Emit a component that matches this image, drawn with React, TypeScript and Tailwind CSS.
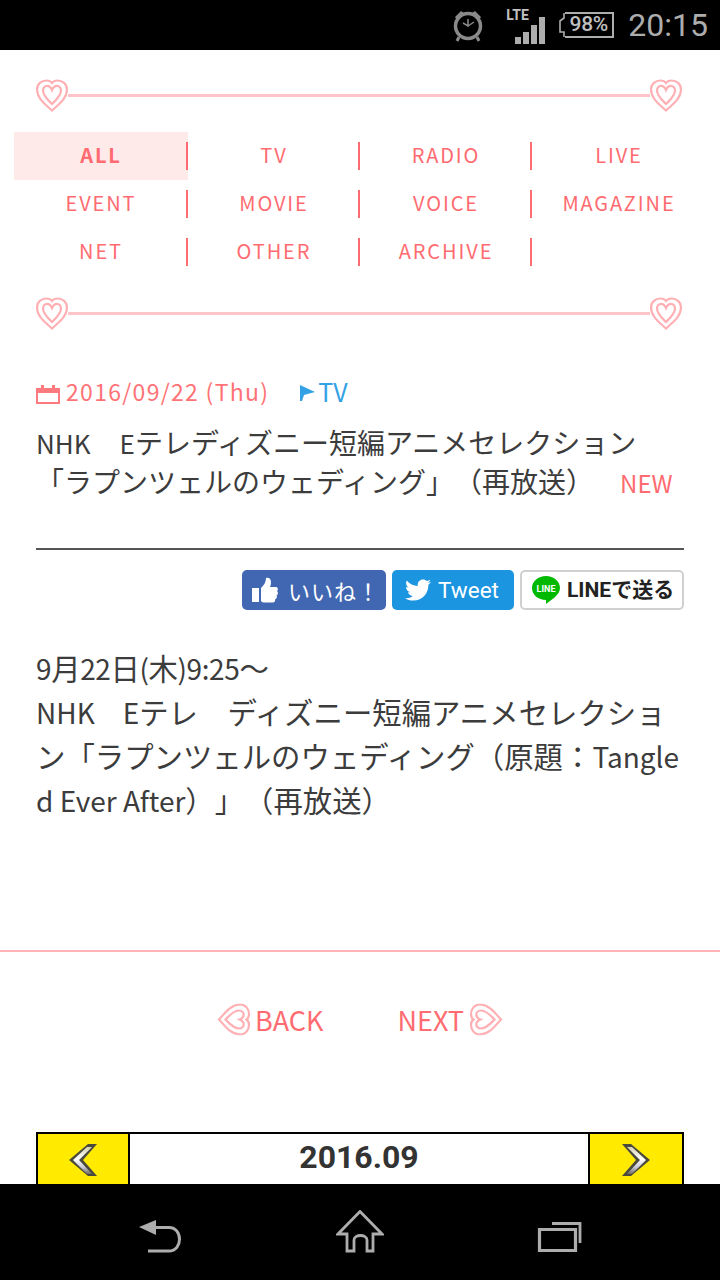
import { FaTwitter } from "react-icons/fa";

const jp = "font-['Noto_Sans_CJK_JP',sans-serif]";

function Heart({ rotate = 0 }: { rotate?: number }) {
  const outer = "M16 31 C11 26 1 20 1 10 C1 4.5 5.5 1 10.5 1 C13 1 15 2 16 3.5 C17 2 19 1 21.5 1 C26.5 1 31 4.5 31 10 C31 20 21 26 16 31 Z";
  const inner = "M16 24.5 C12 20.5 7 16.5 7 11 C7 8 9 6.3 11 6.3 C13 6.3 15 8 16 10.5 C17 8 19 6.3 21 6.3 C23 6.3 25 8 25 11 C25 16.5 20 20.5 16 24.5 Z";
  return (
    <svg width="32" height="33" viewBox="0 0 32 32" className="shrink-0" style={{ transform: `rotate(${rotate}deg)` }}>
      <path d={outer} fill="#fff" stroke="#ffb0b4" strokeWidth="2.2" />
      <path d={inner} fill="#fff" stroke="#ffb0b4" strokeWidth="2.2" />
    </svg>
  );
}

function HeartRule() {
  return (
    <div className="ml-[36px] mr-[38px] flex items-center">
      <Heart />
      <div className="h-[3px] flex-1 bg-[#ffc4c8]" />
      <Heart />
    </div>
  );
}

const items = ["ALL", "TV", "RADIO", "LIVE", "EVENT", "MOVIE", "VOICE", "MAGAZINE", "NET", "OTHER", "ARCHIVE", ""];

function Chevron({ flip = false }: { flip?: boolean }) {
  return (
    <svg width="30" height="34" viewBox="0 0 30 34" style={{ transform: flip ? "scaleX(-1)" : undefined }}>
      <defs>
        <linearGradient id={flip ? "cr" : "cl"} x1="0" y1="0" x2="0" y2="1">
          <stop offset="0" stopColor="#d8d2b0" />
          <stop offset="0.45" stopColor="#ffffff" />
          <stop offset="0.75" stopColor="#c8c8d8" />
          <stop offset="1" stopColor="#706c60" />
        </linearGradient>
      </defs>
      <path d="M20 1 L29 1 L15 17 L29 33 L20 33 L1 17 Z" fill="#4a4a3c" />
      <path d="M19 4 L24 4 L11 17 L24 31 L19 31 L5 17 Z" fill={`url(#${flip ? "cr" : "cl"})`} />
    </svg>
  );
}

export default function App() {
  const tj = "text-[28px] leading-none";
  const bj = "text-[29.4px] leading-none";
  return (
    <div className={`flex h-[1280px] w-[720px] flex-col overflow-hidden bg-white [text-spacing-trim:space-all] ${jp}`}>
      {/* Status bar */}
      <div className="flex h-[50px] shrink-0 items-center justify-end bg-black text-[#adadad]">
        <svg width="34" height="34" viewBox="0 0 34 34" className="mr-[20px]">
          <circle cx="17" cy="18" r="12.5" fill="none" stroke="#8a8a8a" strokeWidth="3.5" />
          <path d="M17 11 V18 L12 15 M17 18 L23 14" fill="none" stroke="#8a8a8a" strokeWidth="1.5" />
          <path d="M4 9 L10 3 L13 5 L6 12 Z M30 9 L24 3 L21 5 L28 12 Z" fill="#8a8a8a" />
          <path d="M8 29 L6 33 M26 29 L28 33" stroke="#8a8a8a" strokeWidth="3" />
        </svg>
        <div className="relative mr-[14px] h-[40px] w-[40px]">
          <span className="absolute left-[1px] top-[3px] font-['Roboto',sans-serif] text-[14px] font-bold leading-[14px] text-[#c0c0c0]">LTE</span>
          <div className="absolute bottom-[1px] right-0 flex items-end gap-[2px]">
            <div className="h-[7px] w-[6px] bg-[#adadad]" />
            <div className="h-[12px] w-[6px] bg-[#adadad]" />
            <div className="h-[19px] w-[6px] bg-[#adadad]" />
            <div className="h-[27px] w-[6px] bg-[#adadad]" />
          </div>
        </div>
        <div className="mr-[14px] flex items-center">
          <svg width="6" height="26" viewBox="0 0 6 26">
            <path d="M5 1 V6 L1 9 V20 L5 20 V25" fill="none" stroke="#adadad" strokeWidth="1.6" />
          </svg>
          <div className="flex h-[26px] w-[49px] items-center justify-center border-2 border-l-0 border-[#adadad] font-['Roboto',sans-serif] text-[21px] font-medium tracking-[-0.3px] text-[#c0c0c0]">98%</div>
        </div>
        <span className="mr-[12px] font-['Roboto',sans-serif] text-[32px] leading-none">20:15</span>
      </div>

      <div className="min-h-0 flex-1 overflow-hidden">
        <div className="pt-[29px]">
          <HeartRule />
        </div>

        <div className="ml-[14px] mt-[20px] grid grid-cols-[174px_172px_172px_172px]">
          {items.map((t, i) => (
            <div key={i} className={`flex h-[48px] items-center ${i === 0 ? "bg-[#ffeaea]" : ""}`}>
              {t ? (
                <>
                  <span className={`mb-[3px] flex-1 pl-[2px] text-center text-[20px] leading-[24px] tracking-[1.9px] text-[#ff6b70] ${i === 0 ? "font-bold" : ""}`}>{t}</span>
                  {i % 4 !== 3 && <div className="h-[28px] w-[2px] bg-[#ff6b70]" />}
                </>
              ) : null}
            </div>
          ))}
        </div>

        <div className="mt-[21px]">
          <HeartRule />
        </div>

        <div className="mx-[36px] mt-[46px] flex h-[30px] items-center">
          <svg width="24" height="20" viewBox="0 0 24 20" className="mt-[5px]">
            <path d="M1 5 H23 V19 H1 Z" fill="none" stroke="#ff7a7e" strokeWidth="2" />
            <path d="M1 5 H23 V9 H1 Z" fill="#ff7a7e" />
            <path d="M5 1 H8 V6 H5 Z M16 1 H19 V6 H16 Z" fill="#ff7a7e" />
          </svg>
          <span className="ml-[6px] text-[23px] leading-[30px] tracking-[1.3px] text-[#ff7377]">2016/09/22 (Thu)</span>
          <svg width="17" height="17" viewBox="0 0 17 17" className="ml-[30px] mt-[3px]">
            <path d="M1 1 L16 8 L5 11 L3 17 L1 17 Z" fill="#33a2e4" />
          </svg>
          <span className="ml-[2px] text-[25px] leading-[30px] text-[#33a2e4]">TV</span>
        </div>

        <div className="mx-[36px] mt-[17px] text-[26px] leading-[39px] text-[#3c3c3c]">
          <div>NHK<span className="text-[29px] leading-none">　</span>E<span className={tj}>テレディズニー短編アニメセレクション</span></div>
          <div className="flex h-[37px] items-center whitespace-nowrap">
            <span className={tj}>「ラプンツェルのウェディング」（再放送）</span>
            <span className="ml-[26px] mt-[4px] text-[24px] leading-none text-[#ff6b70]">NEW</span>
          </div>
        </div>

        <div className="mx-[36px] mt-[49px] h-[2px] bg-[#555]" />

        <div className="mx-[36px] mt-[20px] flex justify-end gap-[6px]">
          <div className="flex h-[40px] w-[144px] items-center rounded-[5px] bg-[#4267b2] pl-[10px] text-white">
            <svg width="26" height="26" viewBox="0 0 26 26" fill="#fff">
              <path d="M0 11 H7 V25 H0 Z" />
              <path d="M9 11 C12 8 14 5 14 1 C17 0 19 2 19 5 C19 7 18.5 9 18 10 H24 C26 10 26.5 13 25 14 C26.5 15 26 18 24.5 18.5 C25.5 20 24.5 22 23 22.5 C23.5 24 22.5 25.5 21 25.5 H13 C11 25.5 10 25 9 24 Z" />
            </svg>
            <span className="ml-[10px] whitespace-nowrap text-[22px] leading-none tracking-[1px]">いいね！</span>
          </div>
          <div className="flex h-[40px] w-[122px] items-center rounded-[5px] bg-[#1b95e0] pl-[13px] text-white">
            <FaTwitter className="h-[26px] w-[26px]" />
            <span className="ml-[7px] font-['Roboto',sans-serif] text-[22.5px] leading-none">Tweet</span>
          </div>
          <div className="flex h-[40px] w-[164px] items-center rounded-[5px] border-2 border-[#d0d0d0] bg-white pl-[10px]">
            <svg width="28" height="30" viewBox="0 0 28 30">
              <path d="M14 1 C21.7 1 28 6 28 13 C28 20 19 25 14 29 L14 25 C6.3 25 0 20 0 13 C0 6 6.3 1 14 1 Z" fill="#00b900" />
              <text x="14" y="16.5" textAnchor="middle" fontSize="9" fontWeight="700" fill="#fff" fontFamily="Roboto, sans-serif">LINE</text>
            </svg>
            <span className="ml-[7px] whitespace-nowrap font-['Roboto','Noto_Sans_CJK_JP',sans-serif] text-[21px] font-bold leading-none text-[#222]">LINEで送る</span>
          </div>
        </div>

        <div className="mx-[36px] mt-[36px] text-[28px] leading-[44px] text-[#3c3c3c] [word-break:break-all]">
          <span className="tracking-[-0.4px]">9<span className={bj}>月</span>22<span className={bj}>日</span>(<span className={bj}>木</span>)9:25<span className={bj}>～</span></span><br />
          NHK　E<span className={bj}>テレ　ディズニー短編アニメセレクション「ラプンツェルのウェディング（原題：</span>Tangled Ever After<span className={bj}>）」（再放送）</span>
        </div>

        <div className="mt-[128px] h-[2px] bg-[#ffb4b8]" />

        <div className="mt-[49px] flex h-[36px] items-center justify-center text-[27px] leading-none text-[#ff6b70]">
          <Heart rotate={90} />
          <span className="ml-[5px]">BACK</span>
          <span className="ml-[74px]">NEXT</span>
          <span className="ml-[6px]"><Heart rotate={-90} /></span>
        </div>

        <div className="mx-[36px] mt-[95px] flex h-[80px] border-2 border-black">
          <div className="flex w-[90px] items-start justify-center bg-[#ffea00] pt-[9px]"><Chevron /></div>
          <div className="flex-1 border-x-2 border-black pt-[3px] text-center font-['Roboto',sans-serif] text-[32px] font-bold leading-[40px] text-[#333]">2016.09</div>
          <div className="flex w-[92px] items-start justify-center bg-[#ffea00] pt-[9px]"><Chevron flip /></div>
        </div>
      </div>

      {/* Nav bar */}
      <div className="relative flex h-[96px] shrink-0 bg-black">
        <svg width="48" height="48" viewBox="0 0 48 48" className="absolute left-[136px] top-[30px]">
          <path d="M3 13 L20 6 V21 Z" fill="#adadad" />
          <path d="M18 13.5 H33 C47 13.5 47 37 33 37 H12" fill="none" stroke="#adadad" strokeWidth="3" />
        </svg>
        <svg width="48" height="48" viewBox="0 0 48 48" className="absolute left-[336px] top-[26px]">
          <path d="M24 1.5 L46 24 H37 V41 H31 V30 C31 24 18 24 18 30 V41 H11 V24 H2 Z" fill="none" stroke="#adadad" strokeWidth="2.8" />
        </svg>
        <svg width="48" height="48" viewBox="0 0 48 48" className="absolute left-[536px] top-[30px]">
          <path d="M3.5 15.5 H39.5 V36.5 H3.5 Z" fill="none" stroke="#adadad" strokeWidth="3.2" />
          <path d="M16 9.5 H44 V29" fill="none" stroke="#adadad" strokeWidth="2.8" />
        </svg>
      </div>
    </div>
  );
}
